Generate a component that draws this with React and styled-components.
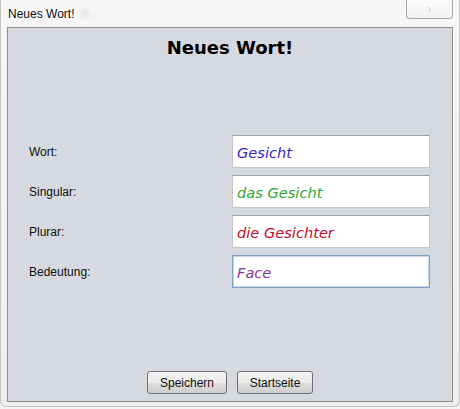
import React from "react";
import styled, { createGlobalStyle } from "styled-components";

const Global = createGlobalStyle`
  html, body {
    margin: 0;
    padding: 0;
    background: #f4f4f4;
  }
`;

const Window = styled.div`
  width: 460px;
  height: 407px;
  box-sizing: border-box;
  display: flex;
  flex-direction: column;
  background: linear-gradient(#f7f7f7, #eeeeee);
  border: 1px solid #c4c4c4;
  border-top: none;
  border-radius: 0 0 6px 6px;
  font-family: "Liberation Sans", Arial, sans-serif;
`;

const TitleBar = styled.div`
  height: 27px;
  display: flex;
  justify-content: space-between;
  align-items: flex-start;
  padding: 0 6px 0 7px;
`;

const Caption = styled.span`
  font-size: 12px;
  color: #111;
  margin-top: 7px;
  line-height: 14px;
`;

const Smudge = styled.span`
  color: #c8c8c8;
  filter: blur(2px);
  margin-left: 6px;
`;

const CloseButton = styled.div`
  width: 45px;
  height: 18px;
  border: 1px solid #a9a9a9;
  border-top: none;
  border-radius: 0 0 4px 4px;
  display: flex;
  align-items: center;
  justify-content: center;
  color: #cfcfcf;
  font-size: 12px;
  background: linear-gradient(#fbfbfb, #f1f1f1);
`;

const Panel = styled.div`
  flex: 1;
  margin: 0 6px 4px 6px;
  border: 1px solid #8e8e8e;
  background: #d6d9df;
  display: flex;
  flex-direction: column;
  padding: 9px 0 7px 0;
`;

const Heading = styled.h1`
  margin: 0;
  text-align: center;
  font-family: "DejaVu Sans", Verdana, sans-serif;
  font-weight: bold;
  font-size: 18px;
  line-height: 22px;
  color: #000;
`;

const Form = styled.div`
  margin-top: 76px;
  display: flex;
  flex-direction: column;
  gap: 7px;
`;

const Row = styled.div`
  display: grid;
  grid-template-columns: 203px 198px;
  align-items: center;
  padding-left: 21px;
`;

const Label = styled.span`
  font-size: 12px;
  color: #111;
`;

const Field = styled.div`
  height: 33px;
  box-sizing: border-box;
  background: #fff;
  border: 1px solid ${p => (p.$focused ? "#7fa2c8" : "#c6c6c6")};
  border-top-color: ${p => (p.$focused ? "#7fa2c8" : "#a2a2a2")};
  box-shadow: ${p => (p.$focused ? "inset 0 0 0 1px #c5d6ea" : "none")};
  display: flex;
  align-items: center;
  padding: 2px 0 0 4px;
  font-family: "DejaVu Sans", Verdana, sans-serif;
  font-style: italic;
  font-size: 14.6px;
  color: ${p => p.$color};
`;

const Buttons = styled.div`
  margin-top: auto;
  display: flex;
  justify-content: center;
  gap: 10px;
`;

const Button = styled.button`
  height: 23px;
  width: ${p => p.$width}px;
  padding: 0;
  border: 1px solid #707070;
  border-radius: 3px;
  background: linear-gradient(#f4f4f4 0%, #ebebeb 50%, #dddddd 51%, #cfcfcf 100%);
  font-family: "Liberation Sans", Arial, sans-serif;
  font-size: 12px;
  color: #111;
`;

const fields = [
  { label: "Wort:", value: "Gesicht", color: "#3a1fc4" },
  { label: "Singular:", value: "das Gesicht", color: "#33a533" },
  { label: "Plurar:", value: "die Gesichter", color: "#c40b2c" },
  { label: "Bedeutung:", value: "Face", color: "#8a3a96", focused: true },
];

const App = () => {
  return (
    <>
      <Global />
      <Window>
        <TitleBar>
          <Caption>
            Neues Wort!<Smudge>Λ...</Smudge>
          </Caption>
          <CloseButton>›</CloseButton>
        </TitleBar>
        <Panel>
          <Heading>Neues Wort!</Heading>
          <Form>
            {fields.map(f => (
              <Row key={f.label}>
                <Label>{f.label}</Label>
                <Field $color={f.color} $focused={f.focused}>{f.value}</Field>
              </Row>
            ))}
          </Form>
          <Buttons>
            <Button $width={80}>Speichern</Button>
            <Button $width={76}>Startseite</Button>
          </Buttons>
        </Panel>
      </Window>
    </>
  );
};

export default App;
